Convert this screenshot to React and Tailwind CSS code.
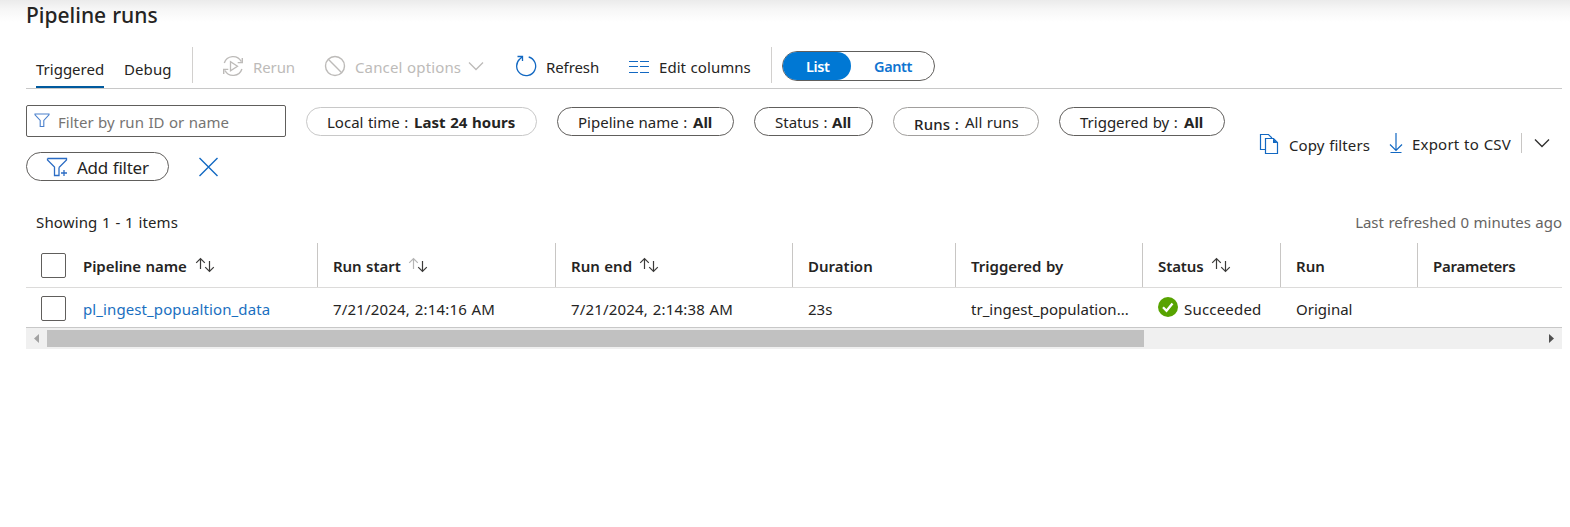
function Icon({ w, h, className, children }) {
  return (
    <svg
      width={w}
      height={h}
      viewBox={`0 0 ${w} ${h}`}
      fill="none"
      stroke="currentColor"
      className={`block shrink-0 ${className}`}
    >
      {children}
    </svg>
  );
}

function Sort({ active, className }) {
  return (
    <Icon w={20} h={16} className={`text-[#3b3a39] ${className}`}>
      <path d="M5.500 12V1.500M1.200 5.800l4.300-4.300 4.300 4.300" strokeWidth="1.200" className={active ? "stroke-[#b5b5b5]" : ""} />
      <path d="M14.500 4v10.500M10.200 10.200l4.300 4.300 4.300-4.300" strokeWidth="1.200" />
    </Icon>
  );
}

function Pill({ className, children }) {
  return (
    <div className={`flex h-[29px] shrink-0 items-center rounded-full border pl-[20px] ${className}`}>
      {children}
    </div>
  );
}

function Box() {
  return <div className="h-[25px] w-[25px] rounded-[2px] border border-[#605e5c]" />;
}

const cols = "grid grid-cols-[57px_235px_238px_237px_163px_187px_138px_137px_144px]";

function Head({ className, text, children, last }) {
  return (
    <div className={`flex h-[44px] items-center whitespace-nowrap pt-[2px] ${last ? "" : "border-r border-[#c8c6c4]"}`}>
      <span className={`font-semibold ${className}`}>{text}</span>
      {children}
    </div>
  );
}

export default function App() {
  return (
    <div className="h-[527px] w-[1570px] overflow-hidden bg-white bg-[linear-gradient(to_bottom,#ebebeb_0px,#f6f6f6_9px,#ffffff_22px)] font-['Noto_Sans',sans-serif] text-[15px] leading-[20px] text-[#252423] [word-spacing:0.6px]">
      <div className="w-[1562px] pl-[26px]">
        <h1 className="h-[47px] whitespace-nowrap pt-px text-[21px] font-medium leading-[28px]">Pipeline runs</h1>

        <div className="flex h-[42px] items-start whitespace-nowrap border-b border-[#c8c8c8]">
          <div className="ml-[10px] h-[41px] w-[68px] border-b-2 border-[#005a9e] pt-[12px]">Triggered</div>
          <div className="ml-[20px] w-[68px] pt-[12px] tracking-[0.1px]">Debug</div>
          <div className="h-[36px] w-px bg-[#d2d0ce]" />
          <div className="flex h-[36px] items-center text-[#bdbbb9]">
            <Icon w={22} h={22} className="ml-[29px] mt-[2px]">
              <path d="M2.300 8A9.200 9.200 0 0 1 19.200 6.500M20.300 3v4.600h-4.600M19.900 14A9.200 9.200 0 0 1 3 15.500M1.700 19v-4.600h4.600" strokeWidth="1.400" />
              <path d="M8.500 6.700v9l7-4.500z" strokeWidth="1.300" />
            </Icon>
            <span className="ml-[9px] mt-[3px] w-[72px] tracking-[-0.1px]">Rerun</span>
            <Icon w={22} h={22} className="-ml-px mt-[2px]">
              <circle cx="11" cy="11" r="9.500" strokeWidth="1.400" />
              <path d="M4.300 4.300l13.400 13.400" strokeWidth="1.400" />
            </Icon>
            <span className="ml-[9px] mt-[3px] w-[113px] tracking-[0.13px]">Cancel options</span>
            <Icon w={16} h={10} className="mt-[2px]">
              <path d="M1 1.500l7 7 7-7" strokeWidth="1.300" />
            </Icon>
          </div>
          <div className="flex h-[36px] items-center">
            <Icon w={22} h={22} className="ml-[31px] mt-[2px] text-[#1268c2]">
              <path d="M13.700 2A9.500 9.500 0 1 1 4.800 4.100L7.500 1.500M2.500 1.500h5V6" strokeWidth="1.300" />
            </Icon>
            <span className="ml-[9px] mt-[3px] w-[83px] tracking-[-0.1px]">Refresh</span>
            <Icon w={20} h={12} className="mt-[3px] text-[#1268c2]">
              <path d="M0 .5h9M11 .5h9M0 5.500h9M11 5.500h9M0 11.500h9M11 11.500h9" />
            </Icon>
            <span className="ml-[10px] mt-[3px] w-[112px] tracking-[0.05px]">Edit columns</span>
          </div>
          <div className="h-[36px] w-px bg-[#d2d0ce]" />
          <div className="ml-[10px] mt-[4px] flex h-[30px] w-[153px] rounded-full border border-[#605e5c] text-[14.500px] font-semibold leading-[28px]">
            <div className="w-[68px] rounded-full bg-[#0078d4] pl-[23px] tracking-[-0.4px] text-white">List</div>
            <div className="pl-[23px] tracking-[-0.4px] text-[#0f74d0]">Gantt</div>
          </div>
        </div>

        <div className="flex h-[109px] justify-between whitespace-nowrap">
          <div className="w-[1215px] pt-[16px]">
            <div className="flex items-start">
              <div className="flex h-[32px] w-[260px] items-center rounded-[2px] border border-[#605e5c] text-[#767472]">
                <Icon w={16} h={15} className="-mt-px ml-[7px] text-[#4a80cc]">
                  <path d="M1 1h14v.8L9.800 7.500v6H6.200v-6L1 1.800z" strokeWidth="1.100" />
                </Icon>
                <span className="ml-[8px] mt-px">Filter by run ID or name</span>
              </div>
              <Pill className="ml-[20px] mt-[2px] w-[231px] border-[#c8c8c8]">
                <span className="w-[87px]">Local time :</span>
                <b className="tracking-[0.05px]">Last 24 hours</b>
              </Pill>
              <Pill className="ml-[20px] mt-[2px] w-[177px] border-[#605e5c]">
                <span className="w-[115px]">Pipeline name :</span>
                <b>All</b>
              </Pill>
              <Pill className="ml-[20px] mt-[2px] w-[119px] border-[#605e5c]">
                <span className="w-[57px]">Status :</span>
                <b>All</b>
              </Pill>
              <Pill className="ml-[20px] mt-[2px] w-[146px] border-[#a19f9d]">
                <span className="w-[51px] pt-[4px] font-medium tracking-[0.15px]">Runs :</span>
                <span>All runs</span>
              </Pill>
              <Pill className="ml-[20px] mt-[2px] w-[166px] border-[#605e5c]">
                <span className="w-[104px]">Triggered by :</span>
                <b>All</b>
              </Pill>
            </div>
            <div className="mt-[15px] flex items-center">
              <div className="flex h-[29px] w-[143px] items-center rounded-full border border-[#605e5c]">
                <Icon w={22} h={20} className="ml-[19px] text-[#2b6cc4]">
                  <path d="M1.500 1.500h19v1.500L13 10.500M1.500 1.500v1.500L8.500 10v8.500h4.500v-8M15 16h6M18 13v6" strokeWidth="1.300" />
                </Icon>
                <span className="ml-[9px] pt-[2px] text-[17px] tracking-[-0.25px]">Add filter</span>
              </div>
              <Icon w={19} h={20} className="ml-[30px] text-[#1268c2]">
                <path d="M.5 1l18 18M18.500 1l-18 18" strokeWidth="1.400" />
              </Icon>
            </div>
          </div>
          <div className="mt-[44px] flex h-[21px] w-[303px] shrink-0 items-start">
            <Icon w={20} h={21} className="text-[#1268c2]">
              <path d="M6.500 16.500h-5v-15h8l3.500 3.500M6.500 5.500h8l4 4v11h-12z" strokeWidth="1.200" />
              <path d="M14 5.500v4.500h4.500z" fill="currentColor" stroke="none" />
            </Icon>
            <span className="ml-[10px] mt-[2px] w-[100px] tracking-[0.1px]">Copy filters</span>
            <Icon w={14} h={21} className="text-[#1268c2]">
              <path d="M7 0v17M1 11.500l6 6 6-6M1.500 19.500h11" strokeWidth="1.200" />
            </Icon>
            <span className="ml-[9px] mt-px w-[109px] tracking-[0.2px]">Export to CSV</span>
            <div className="h-[20px] w-px bg-[#c8c6c4]" />
            <Icon w={16} h={10} className="ml-[12px] mt-[5px] text-[#323130]">
              <path d="M1 1.500l7 7 7-7" strokeWidth="1.400" />
            </Icon>
          </div>
        </div>

        <div className="flex h-[45px] justify-between whitespace-nowrap pl-[10px] pt-[14px]">
          <span className="tracking-[0.14px]">Showing 1 - 1 items</span>
          <span className="tracking-[-0.03px] text-[#666462]">Last refreshed 0 minutes ago</span>
        </div>

        <div className={`${cols} h-[45px] border-b border-[#dcdbda]`}>
          <div className="pl-[15px] pt-[10px]"><Box /></div>
          <Head text="Pipeline name" className="w-[112px] tracking-[-0.05px]"><Sort className="-mt-[3px]" /></Head>
          <Head text="Run start" className="ml-[15px] w-[75px] tracking-[-0.05px]"><Sort active className="-mt-[3px]" /></Head>
          <Head text="Run end" className="ml-[15px] w-[68px]"><Sort className="-mt-[3px]" /></Head>
          <Head text="Duration" className="ml-[15px]" />
          <Head text="Triggered by" className="ml-[15px]" />
          <Head text="Status" className="ml-[15px] w-[53px] tracking-[-0.1px]"><Sort className="-mt-[3px]" /></Head>
          <Head text="Run" className="ml-[15px]" />
          <Head text="Parameters" className="ml-[15px] tracking-[-0.25px]" last />
        </div>
        <div className={`${cols} h-[40px] whitespace-nowrap border-b border-[#c8c8c8] pt-[8px]`}>
          <div className="pl-[15px]"><Box /></div>
          <span className="pt-[3px] tracking-[0.1px] text-[#1a6fc0]">pl_ingest_popualtion_data</span>
          <span className="pl-[15px] pt-[3px] tracking-[0.18px]">7/21/2024, 2:14:16 AM</span>
          <span className="pl-[15px] pt-[3px] tracking-[0.18px]">7/21/2024, 2:14:38 AM</span>
          <span className="pl-[15px] pt-[3px]">23s</span>
          <span className="pl-[15px] pt-[3px] tracking-[0.03px]">tr_ingest_population...</span>
          <div className="flex items-start pl-[15px]">
            <Icon w={20} h={20} className="mt-px">
              <circle cx="10" cy="10" r="10" fill="#57a300" stroke="none" />
              <path d="M5 10.300l3.500 3.500 6-7.300" stroke="#fff" strokeWidth="2.300" />
            </Icon>
            <span className="ml-[6px] pt-[3px] tracking-[0.2px]">Succeeded</span>
          </div>
          <span className="pl-[15px] pt-[3px]">Original</span>
          <span />
        </div>
        <div className="flex h-[21px] items-center bg-[#f0f0f0]">
          <Icon w={21} h={17}><path d="M13 4v9L8 8.500z" fill="#a3a3a3" stroke="none" /></Icon>
          <div className="h-[17px] w-[1097px] bg-[#c1c1c1]" />
          <div className="grow" />
          <Icon w={21} h={17}><path d="M8 4v9l5-4.500z" fill="#505050" stroke="none" /></Icon>
        </div>
      </div>
    </div>
  );
}
